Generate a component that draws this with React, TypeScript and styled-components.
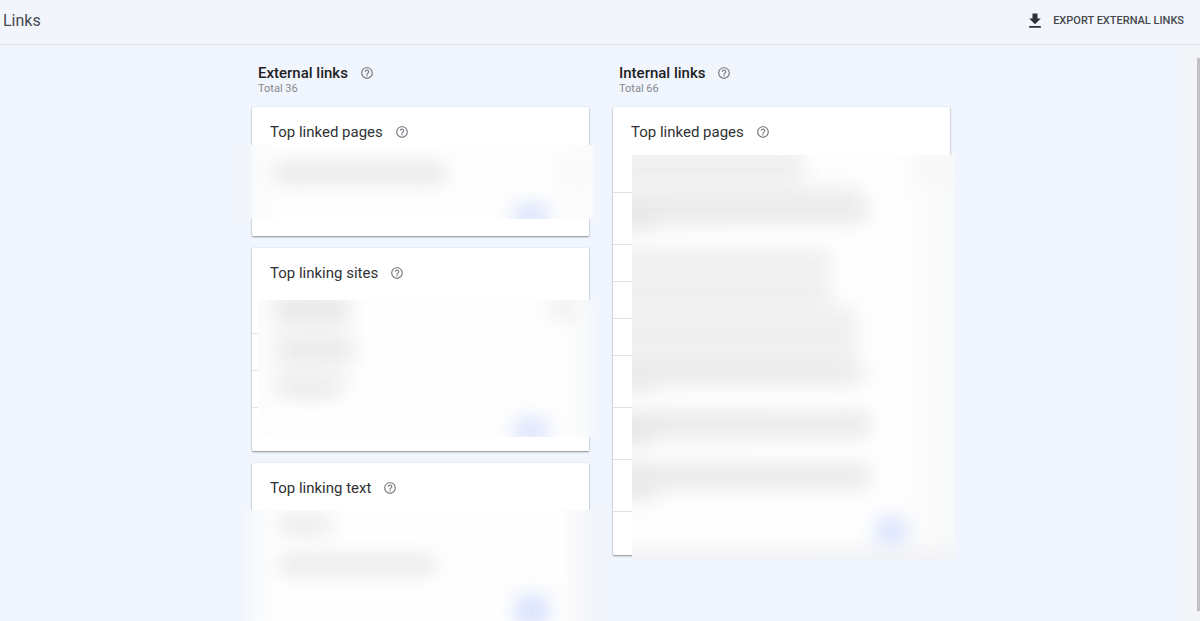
import React from "react";
import styled, { createGlobalStyle } from "styled-components";
import { MdHelpOutline, MdFileDownload } from "react-icons/md";

const GlobalStyle = createGlobalStyle`
  *, *::before, *::after { box-sizing: border-box; }
  body {
    margin: 0;
    background: #f1f5fd;
    color: #303134;
    font-family: Roboto, "Liberation Sans", sans-serif;
  }
  h1, h2, h3, p, ul { margin: 0; padding: 0; font-weight: 400; }
`;

const Shell = styled.div`
  position: relative;
  display: flex;
  flex-direction: column;
  height: 100vh;
  overflow: hidden;
`;

const TopBar = styled.header`
  display: flex;
  flex: none;
  align-items: center;
  justify-content: space-between;
  height: 45px;
  padding: 0 16px 3px 3px;
  background: #f2f5fc;
  border-bottom: 1px solid #dadfe9;
`;

const PageTitle = styled.h1`
  color: #45484d;
  font-size: 16px;
  line-height: 24px;
`;

const ExportButton = styled.button`
  display: flex;
  align-items: center;
  gap: 8px;
  padding: 0;
  border: 0;
  background: none;
  color: #45484d;
  font: 500 11px/16px Roboto, "Liberation Sans", sans-serif;
  text-transform: uppercase;
  cursor: pointer;

  svg { color: #303238; }
`;

const Main = styled.main`
  flex: 1;
  min-height: 0;
  padding: 20px 0 0 2px;
`;

const Columns = styled.div`
  display: grid;
  grid-template-columns: 1fr 1fr;
  align-items: start;
  gap: 24px;
  max-width: 698px;
  margin: 0 auto;
`;

const Column = styled.section`
  display: flex;
  flex-direction: column;
  gap: 12px;
`;

const ColumnHead = styled.div`
  height: 30px;
  padding-left: 6px;
`;

const TitleLine = styled.div`
  display: flex;
  align-items: center;
  gap: 12px;
`;

const ColumnTitle = styled.h2`
  color: #202124;
  font-size: 15px;
  font-weight: 500;
  line-height: 16px;
`;

const Total = styled.p`
  color: #85888e;
  font-size: 11px;
  line-height: 16px;
`;

const HelpButton = styled.button`
  display: flex;
  padding: 0;
  border: 0;
  background: none;
  color: #75787d;
  cursor: pointer;
`;

const Card = styled.article`
  position: relative;
  background: #fff;
  border-radius: 1px;
  box-shadow: 0 1px 2px rgba(0, 0, 0, 0.42), 0 0 1px rgba(0, 0, 0, 0.16);
`;

const CardHead = styled.div`
  display: flex;
  align-items: center;
  gap: 12px;
  height: 49px;
  padding-left: 18px;
`;

const CardTitle = styled.h3`
  font-size: 15px;
  line-height: 20px;
`;

const Rows = styled.ul`
  list-style: none;
`;

const Row = styled.li<{ $tall: boolean }>`
  height: ${(p) => (p.$tall ? 52 : 37)}px;
  border-bottom: 1px solid #e2e2e3;
`;

const CardFoot = styled.div`
  height: 43px;
`;

const Mask = styled.div<{ $top: number; $left: number; $right: number; $height: number; $fill: string }>`
  position: absolute;
  top: ${(p) => p.$top}px;
  left: ${(p) => p.$left}px;
  right: ${(p) => p.$right}px;
  height: ${(p) => p.$height}px;
  overflow: hidden;
  background: ${(p) => p.$fill};
`;

const Smudge = styled.span<{ $x: number; $y: number; $w: number; $h: number; $tone: string }>`
  position: absolute;
  left: ${(p) => p.$x}px;
  top: ${(p) => p.$y}px;
  width: ${(p) => p.$w}px;
  height: ${(p) => p.$h}px;
  border-radius: 6px;
  background: ${(p) => p.$tone};
  filter: blur(10px);
`;

const ScrollTrack = styled.div`
  position: absolute;
  top: 45px;
  right: 0;
  bottom: 0;
  width: 18px;
  padding: 13px 0 10px 15px;
  background: linear-gradient(to right, #f2f5fb, #f3f4f7);
`;

const ScrollThumb = styled.div`
  height: 100%;
  background: #c1c1c1;
`;

const ink = "#e2e2e2";
const pale = "#f6f7f7";
const link = "#d3defd";
const haze = "#f1f1f1";

type Spot = [x: number, y: number, w: number, h: number, tone: string];

interface CardData {
  title: string;
  rows: boolean[];
  mask: { top: number; left: number; right: number; height: number; fill: string };
  spots: Spot[];
}

const external: CardData[] = [
  {
    title: "Top linked pages",
    rows: [false],
    mask: {
      top: 38, left: -20, right: -4, height: 74,
      fill: "linear-gradient(to right, #f1f5fc 0, #f1f5fa 16px, #fafbfc 22px, #fefefe 50px, #fefefe 320px, #fafbfb 100%)",
    },
    spots: [[42, 20, 172, 16, ink], [322, 18, 26, 20, pale], [282, 60, 34, 20, link]],
  },
  {
    title: "Top linking sites",
    rows: [false, false, false],
    mask: {
      top: 52, left: 6, right: -9, height: 137,
      fill: "linear-gradient(to right, #fdfdfd 0, #fefefe 40px, #fefefe 300px, #f8fafb 327px, #f1f5fb 100%)",
    },
    spots: [
      [16, 0, 74, 90, "#f6f6f6"],
      [18, 0, 72, 18, ink], [20, 44, 78, 12, ink], [20, 82, 62, 12, ink],
      [292, -2, 26, 20, "#ededed"], [256, 120, 34, 20, link],
    ],
  },
  {
    title: "Top linking text",
    rows: [false, false],
    mask: {
      top: 47, left: -12, right: -12, height: 130,
      fill: "linear-gradient(to right, #f1f5fc 0, #f8fafc 16px, #fefefe 36px, #fefefe 320px, #f8f9fb 338px, #f1f4fb 100%)",
    },
    spots: [[38, 6, 54, 18, "#e9e9e9"], [38, 48, 158, 14, ink], [276, 86, 32, 28, link]],
  },
];

const internal: CardData[] = [
  {
    title: "Top linked pages",
    rows: [false, true, false, false, false, true, true, true],
    mask: {
      top: 48, left: 19, right: -5, height: 405,
      fill: "linear-gradient(to bottom, transparent 380px, #f2f3f6 100%), linear-gradient(to right, #fdfdfd 0, #fefefe 260px, #f9fafa 310px, #f8f9fa 100%)",
    },
    spots: [
      [-20, -10, 190, 44, haze], [-20, 30, 250, 38, haze], [-20, 96, 216, 60, haze],
      [-20, 150, 244, 78, haze], [-20, 258, 256, 24, haze], [-20, 310, 256, 24, haze],
      [-20, 14, 190, 6, "#eaeaea"], [-20, 50, 256, 10, ink], [-20, 103, 218, 6, "#eaeaea"],
      [-20, 141, 218, 6, "#eaeaea"], [-20, 177, 244, 6, "#eaeaea"], [-20, 214, 256, 8, ink],
      [-20, 264, 256, 10, ink], [-20, 316, 256, 10, ink],
      [-10, 60, 30, 12, ink], [-10, 224, 30, 10, ink], [-10, 274, 30, 14, ink], [-10, 328, 32, 14, ink],
      [280, 2, 40, 22, "#f6f7f7"], [244, 364, 30, 24, link],
    ],
  },
];

function Help({ topic }: { topic: string }) {
  return (
    <HelpButton type="button" aria-label={`Help: ${topic}`}>
      <MdHelpOutline size={14} />
    </HelpButton>
  );
}

function LinkCard({ title, rows, mask, spots }: CardData) {
  return (
    <Card>
      <CardHead>
        <CardTitle>{title}</CardTitle>
        <Help topic={title} />
      </CardHead>
      <Rows>
        {rows.map((tall, i) => (
          <Row key={i} $tall={tall} />
        ))}
      </Rows>
      <CardFoot />
      <Mask
        aria-hidden="true"
        $top={mask.top}
        $left={mask.left}
        $right={mask.right}
        $height={mask.height}
        $fill={mask.fill}
      >
        {spots.map(([x, y, w, h, tone], i) => (
          <Smudge key={i} $x={x} $y={y} $w={w} $h={h} $tone={tone} />
        ))}
      </Mask>
    </Card>
  );
}

function LinkColumn({ title, total, cards }: { title: string; total: number; cards: CardData[] }) {
  return (
    <Column>
      <ColumnHead>
        <TitleLine>
          <ColumnTitle>{title}</ColumnTitle>
          <Help topic={title} />
        </TitleLine>
        <Total>Total {total}</Total>
      </ColumnHead>
      {cards.map((card) => (
        <LinkCard key={card.title} {...card} />
      ))}
    </Column>
  );
}

export default function App() {
  return (
    <Shell>
      <GlobalStyle />
      <TopBar>
        <PageTitle>Links</PageTitle>
        <ExportButton type="button">
          <MdFileDownload size={20} />
          Export external links
        </ExportButton>
      </TopBar>
      <Main>
        <Columns>
          <LinkColumn title="External links" total={36} cards={external} />
          <LinkColumn title="Internal links" total={66} cards={internal} />
        </Columns>
      </Main>
      <ScrollTrack>
        <ScrollThumb />
      </ScrollTrack>
    </Shell>
  );
}
